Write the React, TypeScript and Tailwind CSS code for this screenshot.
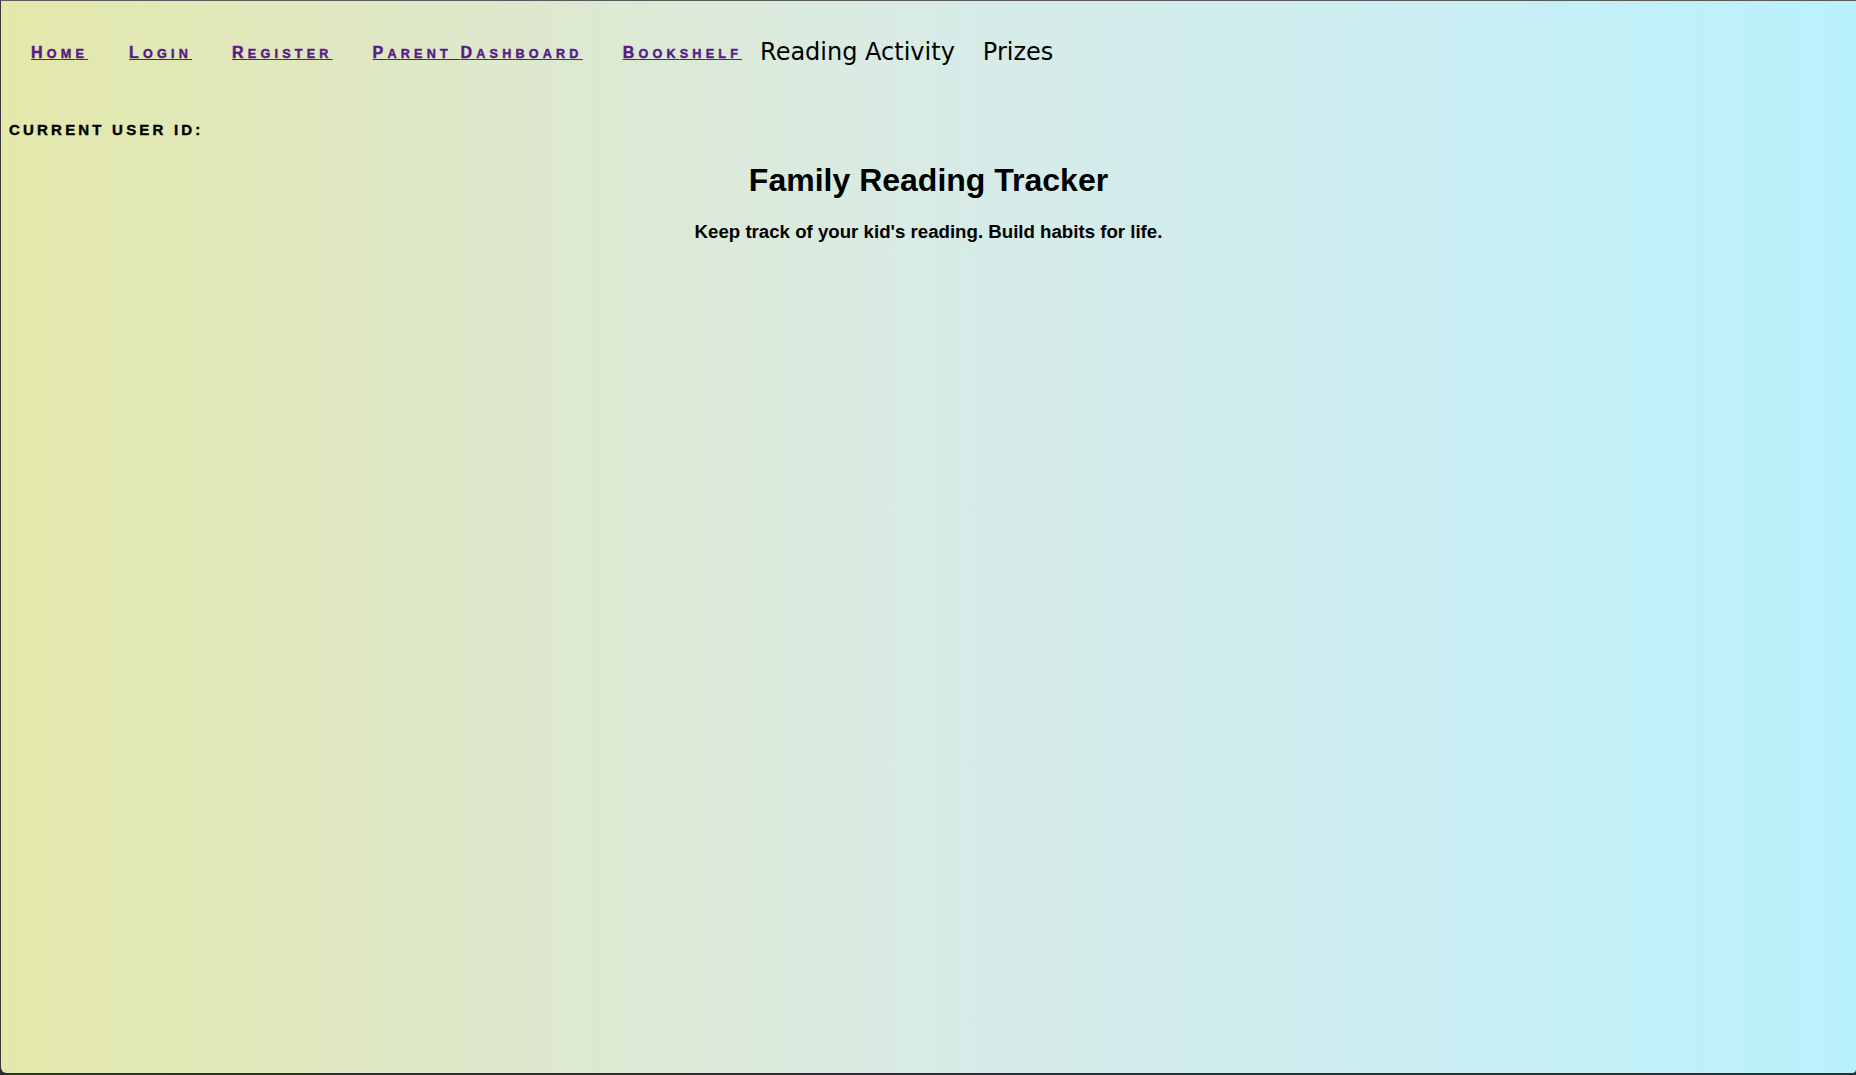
import React from "react";

const linkCls =
  "text-[#551a8b] underline font-bold text-[16px] leading-[20px] tracking-[4.2px] uppercase [-webkit-text-stroke:0.45px_#551a8b] [font-family:'Liberation_Sans',Arial,sans-serif]";

function SC({ text }: { text: string }) {
  // manual small caps: capitals at 16px, lowercase letters as caps at 12.6px
  return (
    <>
      {text.split("").map((c, idx) =>
        c === " " || c === c.toUpperCase() ? (
          <span key={idx}>{c}</span>
        ) : (
          <span key={idx} className="text-[12.6px]">
            {c}
          </span>
        )
      )}
    </>
  );
}

export default function App() {
  return (
    <div className="w-[1856px] h-[1075px] bg-[#2a2e35] overflow-hidden">
      <div className="h-[1073px] border-t border-l border-t-[#5a5a5a] border-l-[#3a3a3a] rounded-bl-[6px] rounded-br-[4px] bg-[linear-gradient(to_right,#e4e8aa_0%,#dee8ca_25%,#d8ebe6_50%,#cbedf1_75%,#b9f2fc_100%)]">
        <nav className="flex items-center pl-[30px] pt-[37px] h-[65px]">
          <a href="#" className={linkCls + " translate-y-[1px]"}><SC text="Home" /></a>
          <a href="#" className={linkCls + " ml-[41px] translate-y-[1px]"}><SC text="Login" /></a>
          <a href="#" className={linkCls + " ml-[40px] translate-y-[1px]"}><SC text="Register" /></a>
          <a href="#" className={linkCls + " ml-[40px] translate-y-[1px]"}><SC text="Parent Dashboard" /></a>
          <a href="#" className={linkCls + " ml-[40px] translate-y-[1px]"}><SC text="Bookshelf" /></a>
          <span className="ml-[18px] text-[24px] leading-[28px] text-black [font-family:'DejaVu_Sans',sans-serif]">
            Reading Activity
          </span>
          <span className="ml-[28px] text-[24px] leading-[28px] text-black [font-family:'DejaVu_Sans',sans-serif]">
            Prizes
          </span>
        </nav>
        <div className="mt-[55px] pl-[8px] text-[15px] leading-[18px] font-bold uppercase tracking-[3.2px] text-black [-webkit-text-stroke:0.4px_#000] [font-family:'Liberation_Sans',Arial,sans-serif]">
          Current user id:
        </div>
        <h1 className="mt-[22px] text-center text-[32px] leading-[38px] font-bold text-black [font-family:'Liberation_Sans',Arial,sans-serif]">
          Family Reading Tracker
        </h1>
        <p className="mt-[22px] text-center text-[18.67px] leading-[22px] font-bold text-black [font-family:'Liberation_Sans',Arial,sans-serif]">
          Keep track of your kid's reading. Build habits for life.
        </p>
      </div>
    </div>
  );
}
